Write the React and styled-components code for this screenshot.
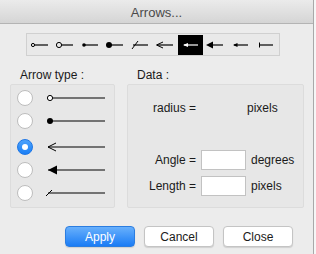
// Imports
import React, { useState } from 'react';
import styled, { createGlobalStyle } from 'styled-components';

// Data
const toolTypes = ['ring-s', 'ring-l', 'dot-s', 'dot-l', 'slash', 'open', 'small', 'tri-l', 'tri-s', 'bar'];
const arrowTypes = [
	{ id: 'ring', gap: 0 },
	{ id: 'dot', gap: 0 },
	{ id: 'open', gap: 3 },
	{ id: 'tri', gap: 0 },
	{ id: 'slash', gap: 0 },
];

// Tool icon
const ToolIcon = ({ kind, color }) => {
	const c = color;
	const heads = {
		'ring-s': <circle cx="5" cy="10" r="1.6" fill="none" stroke={ c } strokeWidth="1" />,
		'ring-l': <circle cx="6" cy="10" r="2.6" fill="none" stroke={ c } strokeWidth="1" />,
		'dot-s': <circle cx="6" cy="10" r="1.8" fill={ c } />,
		'dot-l': <circle cx="6" cy="10" r="3" fill={ c } />,
		'slash': <line x1="4" y1="14" x2="10" y2="6" stroke={ c } strokeWidth="1" />,
		'open': <polyline points="10,7 3.5,10 10,13" fill="none" stroke={ c } strokeWidth="1" />,
		'small': <polygon points="5,10 10,8 10,12" fill={ c } />,
		'tri-l': <polygon points="3,10 10,6.5 10,13.5" fill={ c } />,
		'tri-s': <polygon points="5,10 9.5,8 9.5,12" fill={ c } />,
		'bar': <line x1="6.5" y1="7.5" x2="6.5" y2="12.5" stroke={ c } strokeWidth="1" />,
	};
	const start = { 'ring-s': 6.6, 'ring-l': 8.6, 'open': 4, 'slash': 5, 'tri-l': 8, 'bar': 6.5 }[kind] || 6;
	return(
		<svg width="25" height="20" viewBox="0 0 25 20">
			<line x1={ start } y1="10" x2="20" y2="10" stroke={ c } strokeWidth="1.2" />
			{ heads[kind] }
		</svg>
	);
};

// Arrow icon
const ArrowIcon = ({ kind }) => {
	const heads = {
		'ring': <circle cx="4" cy="6" r="2.6" fill="#fff" stroke="#000" strokeWidth="1" />,
		'dot': <circle cx="4" cy="6" r="3" fill="#000" />,
		'open': <polyline points="10,2 2,6 10,10" fill="none" stroke="#000" strokeWidth="1" />,
		'tri': <polygon points="2,6 11,1.5 11,10.5" fill="#000" />,
		'slash': <line x1="0" y1="9" x2="6" y2="3" stroke="#000" strokeWidth="1" />,
	};
	return(
		<svg width="60" height="12" viewBox="0 0 60 12">
			<line x1={ kind === 'ring' ? 6.6 : 2 } y1="6" x2="59" y2="6" stroke="#000" strokeWidth="1.2" />
			{ heads[kind] }
		</svg>
	);
};

// Component
const App = () => {

	// State
	const [tool, setTool] = useState(6);
	const [arrow, setArrow] = useState(2);

	// Return
	return(
		<>
			<GlobalStyle />
			<Window>
				<TitleBar>Arrows...</TitleBar>
				<ToolRow>
					<Toolbar>
						{
							toolTypes.map((kind, i) => (
								<ToolCell key={ kind } $active={ tool === i } onClick={ () => setTool(i) }>
									<ToolIcon kind={ kind } color={ tool === i ? '#fff' : '#000' } />
								</ToolCell>
							))
						}
					</Toolbar>
				</ToolRow>
				<Panels>
					<Group $width="105px">
						<GroupLabel>Arrow type :</GroupLabel>
						<GroupBox $pad="1px 0 0 6px">
							{
								arrowTypes.map((a, i) => (
									<ArrowRow key={ a.id } $gap={ a.gap } onClick={ () => setArrow(i) }>
										<Radio $checked={ arrow === i } />
										<ArrowIcon kind={ a.id } />
									</ArrowRow>
								))
							}
						</GroupBox>
					</Group>
					<Group $width="177px">
						<GroupLabel>Data :</GroupLabel>
						<GroupBox $pad="13px 0 0 0">
							<DataRow>
								<FieldLabel>radius =</FieldLabel>
								<span />
								<Unit $shift="-4px">pixels</Unit>
							</DataRow>
							<DataRow $space="32px">
								<FieldLabel>Angle =</FieldLabel>
								<Field />
								<Unit>degrees</Unit>
							</DataRow>
							<DataRow $space="6px">
								<FieldLabel>Length =</FieldLabel>
								<Field />
								<Unit>pixels</Unit>
							</DataRow>
						</GroupBox>
					</Group>
				</Panels>
				<Buttons>
					<Button $primary>Apply</Button>
					<Button>Cancel</Button>
					<Button>Close</Button>
				</Buttons>
			</Window>
		</>
	);

};

// Styled
const GlobalStyle = createGlobalStyle`
	html, body {
		margin: 0;
		padding: 0;
		background: #f6f6f6;
	}
	body {
		font-family: "Liberation Sans", Arial, sans-serif;
	}
`;

const Window = styled.div`
	width: 313px;
	height: 254px;
	background: #ececec;
	border-right: 1px solid #a9a9a9;
	display: flex;
	flex-direction: column;
`;

const TitleBar = styled.div`
	height: 24px;
	box-sizing: border-box;
	padding-top: 1px;
	border-bottom: 1px solid #b4b4b4;
	background: linear-gradient(#ebebeb, #d5d5d5);
	display: flex;
	align-items: center;
	justify-content: center;
	font-size: 13px;
	color: #4a4a4a;
`;

const ToolRow = styled.div`
	display: flex;
	padding: 9px 0 0 26px;
`;

const Toolbar = styled.div`
	display: flex;
	padding: 1px 1px 0 1px;
	border: 1px solid #d0d0d0;
	background: #e9e9e9;
`;

const ToolCell = styled.div`
	width: 25px;
	height: 20px;
	display: flex;
	background: ${ ({ $active }) => $active ? '#000' : 'transparent' };
	cursor: pointer;
`;

const Panels = styled.div`
	display: flex;
	gap: 12px;
	padding: 12px 0 0 10px;
`;

const Group = styled.div`
	width: ${ ({ $width }) => $width };
	display: flex;
	flex-direction: column;
`;

const GroupLabel = styled.div`
	font-size: 12px;
	color: #1a1a1a;
	height: 16px;
	padding-left: 10px;
`;

const GroupBox = styled.div`
	height: 124px;
	box-sizing: border-box;
	border: 1px solid #dcdcdc;
	background: #e7e7e7;
	border-radius: 2px;
	padding: ${ ({ $pad }) => $pad };
`;

const ArrowRow = styled.div`
	height: 23px;
	margin-top: ${ ({ $gap }) => $gap }px;
	display: flex;
	align-items: center;
	gap: 13px;
	cursor: pointer;
`;

const Radio = styled.span`
	width: 16px;
	height: 16px;
	box-sizing: border-box;
	border-radius: 50%;
	flex: none;
	display: flex;
	align-items: center;
	justify-content: center;
	border: 1px solid ${ ({ $checked }) => $checked ? '#1c76e6' : '#bdbdbd' };
	background: ${ ({ $checked }) => $checked ? 'linear-gradient(#4ea3fb, #1a7ff6)' : '#fff' };
	&::after {
		content: '';
		width: 6px;
		height: 6px;
		border-radius: 50%;
		background: #fff;
		display: ${ ({ $checked }) => $checked ? 'block' : 'none' };
	}
`;

const DataRow = styled.div`
	display: grid;
	grid-template-columns: 68px 45px auto;
	column-gap: 5px;
	align-items: center;
	height: 20px;
	margin-top: ${ ({ $space }) => $space || '0' };
	font-size: 12px;
	color: #1a1a1a;
`;

const FieldLabel = styled.span`
	text-align: right;
`;

const Unit = styled.span`
	margin-left: ${ ({ $shift }) => $shift || '0' };
`;

const Field = styled.input`
	width: 45px;
	height: 20px;
	box-sizing: border-box;
	border: 1px solid #c2c2c2;
	background: #fff;
	margin: 0;
	padding: 0 3px;
	font: inherit;
	outline: none;
`;

const Buttons = styled.div`
	display: flex;
	gap: 9px;
	padding: 18px 0 0 65px;
`;

const Button = styled.button`
	width: 70px;
	height: 21px;
	margin: 0;
	padding: 0;
	border-radius: 4px;
	font-family: inherit;
	font-size: 12px;
	color: ${ ({ $primary }) => $primary ? '#fff' : '#1a1a1a' };
	border: 1px solid ${ ({ $primary }) => $primary ? '#2b7de0' : '#c4c4c4' };
	background: ${ ({ $primary }) => $primary ? 'linear-gradient(#68b0fc, #1a7cf5)' : '#fff' };
	box-shadow: 0 1px 1px rgba(0, 0, 0, 0.12);
	cursor: pointer;
`;

// Export
export default App;
